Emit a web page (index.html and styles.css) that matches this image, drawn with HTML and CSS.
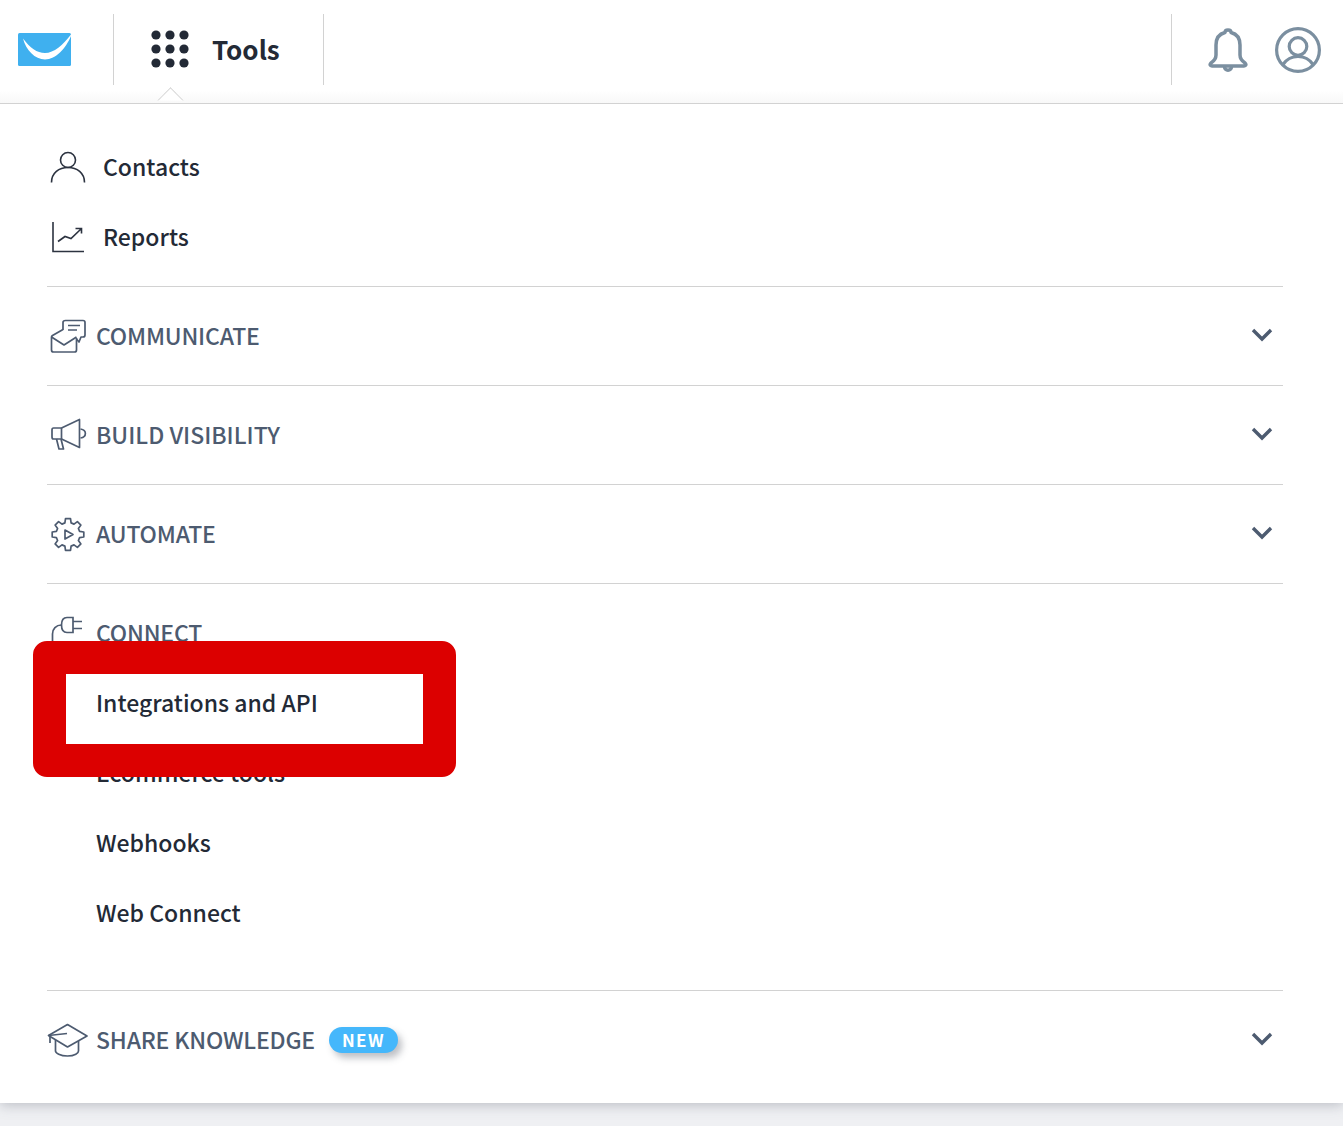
FILE: index.html
```html
<!DOCTYPE html>
<html lang="en">
<head>
<meta charset="utf-8">
<title>Tools</title>
<link rel="stylesheet" href="styles.css">
</head>
<body>
<div class="panel">
  <header class="topbar">
    <div class="logo-cell">
      <svg class="logo" width="53" height="33" viewBox="0 0 53 33"><rect width="53" height="33" rx="1.500" fill="#3fb0ef"/><path d="M5 5.500C12 15 19 20 27 20C36 20 45 12 53 1.500V3C48 15 38 26.500 27 26.500C17 26.500 8 17 5 5.500Z" fill="#fff"/></svg>
    </div>
    <div class="tools-cell">
      <svg class="grid-icon" width="38" height="38" viewBox="0 0 38 38" fill="#232a36"><circle cx="5" cy="5" r="4.600"/><circle cx="19" cy="5" r="4.600"/><circle cx="33" cy="5" r="4.600"/><circle cx="5" cy="19" r="4.600"/><circle cx="19" cy="19" r="4.600"/><circle cx="33" cy="19" r="4.600"/><circle cx="5" cy="33" r="4.600"/><circle cx="19" cy="33" r="4.600"/><circle cx="33" cy="33" r="4.600"/></svg>
      <span class="tools-label">Tools</span>
    </div>
    <div class="spacer"></div>
    <div class="user-cell">
      <svg width="40" height="46" viewBox="0 0 40 46" fill="none" stroke="#7b8fa0" stroke-width="3.500" stroke-linejoin="round"><path d="M17 5.500C17 2 23 2 23 5.500C29 7 32 12 32 18V28C32 32 34 34 37 36C38.500 37.500 38 39 36 39H4C2 39 1.500 37.500 3 36C6 34 8 32 8 28V18C8 12 11 7 17 5.500Z"/><path d="M16.500 39.500C16.500 44.500 23.500 44.500 23.500 39.500"/></svg>
      <svg width="46" height="46" viewBox="0 0 46 46" fill="none" stroke="#7b8fa0" stroke-width="3.200"><circle cx="23" cy="23" r="21.400"/><circle cx="23" cy="19.500" r="8.800"/><path d="M8 37.500C12 31.500 17 29.500 23 29.500C29 29.500 34 31.500 38 37.500"/></svg>
    </div>
    <span class="notch"></span>
  </header>

  <nav class="menu">
    <div class="top-links">
      <a class="link link-top">
        <svg width="36" height="32" viewBox="0 0 36 32" fill="none" stroke="#2c3340" stroke-width="1.600"><circle cx="18" cy="9" r="7.500"/><path d="M1.500 31.500C1.500 22 9 16.500 18 16.500C27 16.500 34.500 22 34.500 31.500"/></svg>
        <span class="link-text">Contacts</span>
      </a>
      <a class="link link-top">
        <svg width="36" height="32" viewBox="0 0 36 32" fill="none" stroke="#2c3340" stroke-width="1.600"><path d="M3 1V30.500H34"/><path d="M8 20.500L15 15.500L21 17.500L31 8M25.500 7.500H31.500V12.500"/></svg>
        <span class="link-text">Reports</span>
      </a>
    </div>

    <section class="group">
      <div class="group-head">
        <svg class="group-icon" width="38" height="34" viewBox="0 0 38 34" fill="none" stroke="#4d5b70" stroke-width="1.700" stroke-linejoin="round"><path d="M14 11V3.500C14 2 15 1.500 16.500 1.500H34C35.500 1.500 36 2 36 3.500V16C36 17.500 35 18 34 18H32L30 23L27.500 20"/><path d="M19 6.500H31M19 11H28"/><path d="M14 10.500L3.500 16.500C2.800 17 2.500 17.500 2.500 18V31C2.500 32.500 3.500 33 4.500 33H25.500C26.500 33 27.500 32.500 27.500 31V19"/><path d="M2.500 18L15 26L27.500 18"/></svg>
        <span class="group-title">COMMUNICATE</span>
        <svg class="chev" width="22" height="14" viewBox="0 0 22 14" fill="none" stroke="#4d5b70" stroke-width="3.400"><path d="M2 2L11 11L20 2"/></svg>
      </div>
    </section>

    <section class="group">
      <div class="group-head">
        <svg class="group-icon" width="38" height="34" viewBox="0 0 38 34" fill="none" stroke="#4d5b70" stroke-width="1.700" stroke-linejoin="round"><path d="M4.500 10H12.500L30.500 1.500V29.500L12.500 21H4.500C3.500 21 3 20 3 19V12C3 11 3.500 10 4.500 10Z"/><path d="M12.500 10V21M7.500 21L10 31H14.500L12 21"/><path d="M31.500 11C38 12 38 19 31.500 20"/></svg>
        <span class="group-title group-title-wide">BUILD VISIBILITY</span>
        <svg class="chev" width="22" height="14" viewBox="0 0 22 14" fill="none" stroke="#4d5b70" stroke-width="3.400"><path d="M2 2L11 11L20 2"/></svg>
      </div>
    </section>

    <section class="group">
      <div class="group-head">
        <svg class="group-icon" width="38" height="36" viewBox="0 0 38 36" fill="none" stroke="#4d5b70" stroke-width="1.700" stroke-linejoin="round"><path d="M15.900 6.900L16.500 2.700H21.500L22.100 6.900L25 8.100L28.400 5.600L31.900 9.100L29.400 12.500L30.600 15.400L34.800 16V21L30.600 21.600L29.400 24.500L31.900 27.900L28.400 31.400L25 28.900L22.100 30.100L21.500 34.300H16.500L15.900 30.100L13 28.900L9.600 31.400L6.100 27.900L8.600 24.500L7.400 21.600L3.200 21V16L7.400 15.400L8.600 12.500L6.100 9.100L9.600 5.600L13 8.100Z"/><path d="M16 14L24 18.500L16 23Z"/></svg>
        <span class="group-title">AUTOMATE</span>
        <svg class="chev" width="22" height="14" viewBox="0 0 22 14" fill="none" stroke="#4d5b70" stroke-width="3.400"><path d="M2 2L11 11L20 2"/></svg>
      </div>
    </section>

    <section class="group group-open">
      <div class="group-head">
        <svg class="group-icon" width="38" height="34" viewBox="0 0 38 34" fill="none" stroke="#4d5b70" stroke-width="1.700"><path d="M24 1.500H18C14 1.500 12.500 5 12.500 9C12.500 13 14 16.500 18 16.500H24ZM24 5.500H33M24 12.500H33"/><path d="M12.500 9C7 9 3.500 13 3.500 18V26"/></svg>
        <span class="group-title">CONNECT</span>
      </div>
      <a class="link link-sub"><span class="link-text">Integrations and API</span></a>
      <a class="link link-sub"><span class="link-text">Ecommerce tools</span></a>
      <a class="link link-sub"><span class="link-text">Webhooks</span></a>
      <a class="link link-sub"><span class="link-text">Web Connect</span></a>
    </section>

    <section class="group group-last">
      <div class="group-head">
        <svg class="group-icon-lg" width="42" height="34" viewBox="0 0 42 34" fill="none" stroke="#4d5b70" stroke-width="1.700" stroke-linejoin="round"><path d="M20.500 1.500L40 13L20.500 24L1.500 12.500Z"/><path d="M1.500 12.500L20 10.500"/><path d="M3 13.500V20M8.500 17V28C8.500 30 13 33 20.500 33C28 33 31.500 30 31.500 28V18"/></svg>
        <span class="group-title">SHARE KNOWLEDGE</span>
        <span class="badge">NEW</span>
        <svg class="chev" width="22" height="14" viewBox="0 0 22 14" fill="none" stroke="#4d5b70" stroke-width="3.400"><path d="M2 2L11 11L20 2"/></svg>
      </div>
    </section>
  </nav>
</div>
<div class="highlight"></div>
</body>
</html>
```
FILE: styles.css
```css
* { box-sizing: border-box; }
html, body { margin: 0; padding: 0; }
body {
  position: relative;
  height: 1126px;
  overflow: hidden;
  background: #eff0f3;
  font-family: "Noto Sans CJK SC", "Noto Sans", sans-serif;
  color: #232a36;
}
.panel {
  height: 1103px;
  background: #fff;
  box-shadow: 0 2px 12px rgba(90, 95, 110, .35);
}
.topbar {
  position: relative;
  display: flex;
  height: 104px;
  align-items: flex-start;
  background: linear-gradient(#fff 88%, #f8f8f8);
  border-bottom: 1px solid #d2d2d2;
}
.logo-cell {
  display: flex;
  width: 114px;
  height: 71px;
  margin-top: 14px;
  padding-left: 18px;
  padding-top: 19px;
  border-right: 1px solid #d2d2d2;
}
.tools-cell {
  display: flex;
  align-items: center;
  width: 210px;
  height: 71px;
  margin-top: 14px;
  padding-left: 37px;
  border-right: 1px solid #d2d2d2;
}
.grid-icon { flex: none; margin-top: -1px; }
.tools-label {
  margin-left: 23px;
  padding-bottom: 2px;
  font-size: 26px;
  font-weight: 700;
  line-height: 70px;
}
.spacer { flex: 1; }
.user-cell {
  display: flex;
  align-items: flex-start;
  gap: 27px;
  width: 172px;
  height: 71px;
  margin-top: 14px;
  padding-left: 36px;
  padding-top: 13px;
  border-left: 1px solid #d2d2d2;
}
.notch {
  position: absolute;
  left: 161px;
  top: 91px;
  width: 19px;
  height: 19px;
  background: #fff;
  border-left: 1px solid #d0d0d0;
  border-top: 1px solid #d0d0d0;
  transform: rotate(45deg);
  clip-path: polygon(0 0, 100% 0, 0 100%);
}
.menu { padding: 28px 60px 0 47px; }
.top-links { padding-bottom: 14px; }
.link {
  display: flex;
  align-items: center;
  height: 70px;
  font-size: 23px;
  font-weight: 500;
  color: #232a36;
}
.link-text { line-height: 34px; padding-bottom: 2px; }
.link-top svg { flex: none; margin: 0 17px 0 3px; }
.link-sub { padding-left: 49px; }
.group { border-top: 1px solid #d2d2d2; }
.group-head {
  display: flex;
  align-items: center;
  height: 98px;
}
.group-icon { flex: none; margin-left: 2px; margin-right: 9px; }
.group-icon-lg { flex: none; margin-right: 7px; }
.group-open { height: 407px; }
.group-open .group-head + .link { margin-top: -14px; }
.group-title {
  font-size: 23px;
  line-height: 34px;
  letter-spacing: -.2px;
  font-weight: 500;
  color: #4d5b70;
  padding-bottom: 2px;
}
.group-title-wide { letter-spacing: 0; }
.chev { flex: none; margin-left: auto; margin-right: 10px; margin-top: -2px; }
.badge {
  margin-left: 14px;
  width: 69px;
  height: 26px;
  border-radius: 13px;
  background: #45b7fb;
  color: #fff;
  font-size: 17px;
  font-weight: 700;
  letter-spacing: 1.400px;
  line-height: 25px;
  text-align: center;
  box-shadow: 4px 5px 7px rgba(70, 75, 90, .35);
}
.highlight {
  position: absolute;
  left: 33px;
  top: 641px;
  width: 423px;
  height: 136px;
  border: 33px solid #dc0000;
  border-radius: 14px;
}
```
